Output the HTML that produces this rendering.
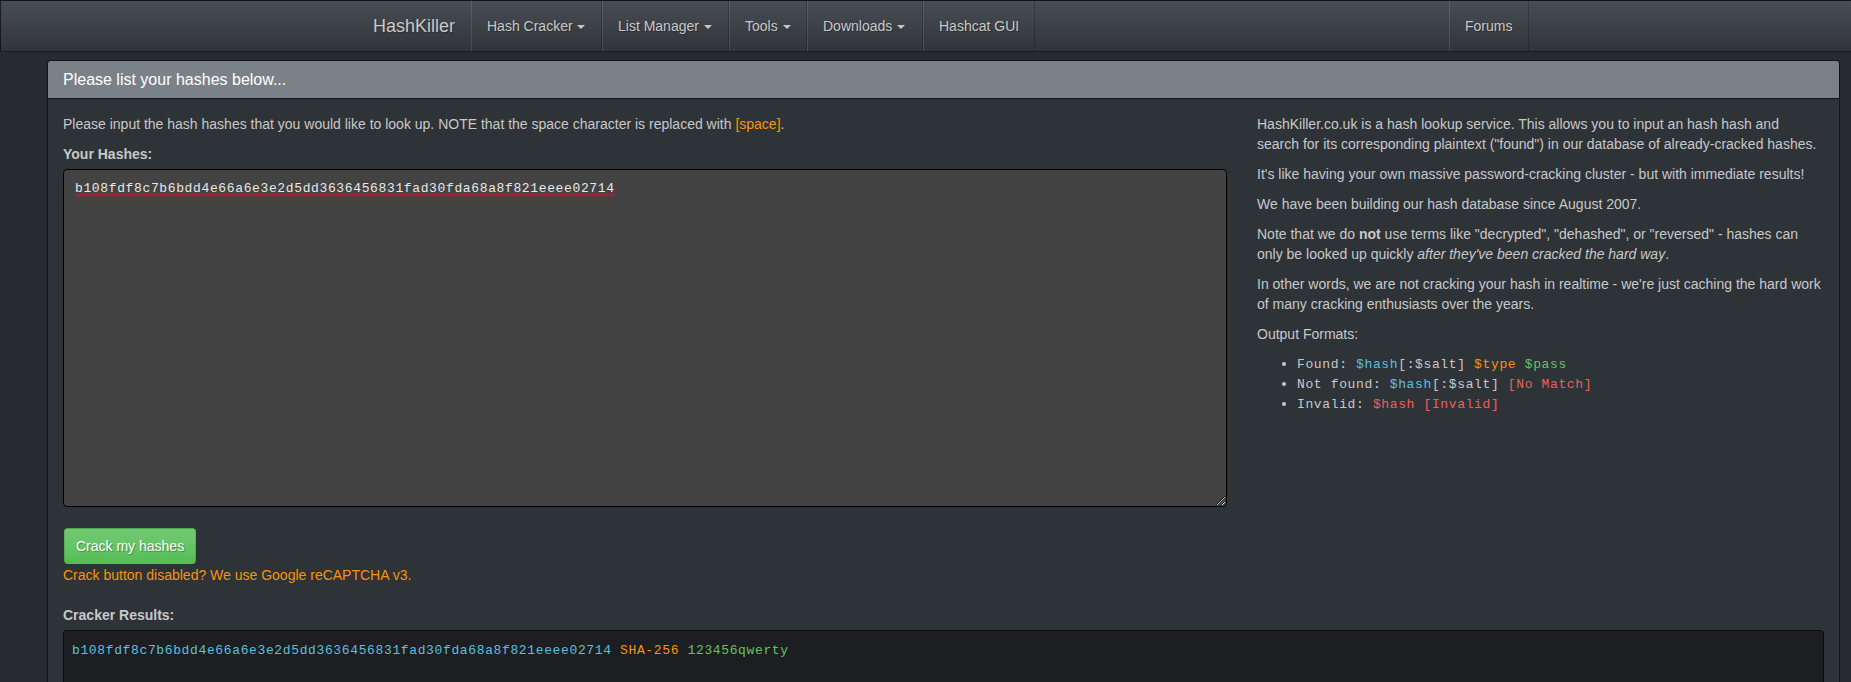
<!DOCTYPE html>
<html>
<head>
<meta charset="utf-8">
<style>
*{box-sizing:border-box;}
html,body{margin:0;padding:0;}
body{width:1851px;height:682px;overflow:hidden;background:#272b30;color:#c8c8c8;font-family:"Liberation Sans",sans-serif;font-size:14px;line-height:20px;position:relative;}
.mono{font-family:"Liberation Mono",monospace;}
.navbar{position:absolute;left:0;top:0;width:1853px;height:52px;border:1px solid rgba(0,0,0,0.6);background-image:linear-gradient(#484e55,#3a3f44 60%,#313539);text-shadow:1px 1px 1px rgba(0,0,0,0.3);}
.brand{position:absolute;left:357px;top:0;height:50px;padding:15px;font-size:18px;line-height:20px;color:#c8c8c8;}
.nav{position:absolute;top:0;height:50px;}
.nav a{position:absolute;top:0;height:50px;padding:15px;line-height:20px;color:#c8c8c8;border-left:1px solid rgba(255,255,255,0.1);border-right:1px solid rgba(0,0,0,0.2);white-space:nowrap;}
.caret{display:inline-block;width:0;height:0;margin-left:1px;vertical-align:middle;border-top:4px solid #c8c8c8;border-right:4px solid transparent;border-left:4px solid transparent;position:relative;top:0px;}
.panel{position:absolute;left:47px;top:60px;width:1793px;height:700px;background:#2e3338;border:1px solid rgba(0,0,0,0.6);border-radius:4px;}
.ph{height:38px;background:#7a8288;color:#fff;padding:10px 15px;border-bottom:1px solid #111315;border-radius:3px 3px 0 0;font-size:16px;line-height:17.6px;}
.left{position:absolute;left:15px;top:53px;width:1164px;}
.right{position:absolute;left:1209px;top:53px;width:566px;}
p{margin:0 0 10px;}
label{display:block;font-weight:bold;margin-bottom:5px;}
.orange{color:#f89406;}
.ta{position:relative;height:338px;background:#434343;border:1px solid #000;border-radius:4px;padding:6px 12px;color:#e8e8e8;font-size:14px;line-height:20px;}
.tm{font-size:13px;letter-spacing:0.63px;line-height:20px;}
.tl{position:relative;top:0px;line-height:0;}
li{height:20px;}
.squig{text-decoration:underline wavy #d21e1e;text-decoration-thickness:1px;text-underline-offset:2px;}
.btn{position:absolute;left:0;top:360px;width:132px;height:36px;border:1px solid rgba(0,0,0,0.1);border-radius:4px;background-image:linear-gradient(#72c972,#62c462 60%,#55bb55);color:#fff;padding:7px 12px 7px 11px;line-height:20px;text-shadow:1px 1px 1px rgba(0,0,0,0.3);white-space:nowrap;}
ul{margin:0 0 10px;padding-left:40px;}
.cy{color:#5bc0de;}
.gr{color:#62c462;}
.rd{color:#ee5f5b;}
.pre{position:absolute;left:15px;top:569px;width:1761px;height:200px;background:#1c1e22;border:1px solid rgba(0,0,0,0.6);border-radius:4px;padding:9px 9px;font-size:14px;line-height:20px;}
</style>
</head>
<body>
<div class="navbar">
  <div class="brand">HashKiller</div>
  <div class="nav">
    <a style="left:470px;width:131px">Hash Cracker <span class="caret"></span></a>
    <a style="left:601px;width:127px">List Manager <span class="caret"></span></a>
    <a style="left:728px;width:78px">Tools <span class="caret"></span></a>
    <a style="left:806px;width:116px">Downloads <span class="caret"></span></a>
    <a style="left:922px;width:112px">Hashcat GUI</a>
    <a style="left:1448px;width:80px">Forums</a>
  </div>
</div>
<div class="panel">
  <div class="ph">Please list your hashes below...</div>
  <div class="left">
    <p>Please input the hash hashes that you would like to look up. NOTE that the space character is replaced with <span class="orange">[space]</span>.</p>
    <label>Your Hashes:</label>
    <div class="ta"><div class="mono tm" style="position:absolute;left:11px;top:9px;">b108fdf8c7b6bdd4e66a6e3e2d5dd3636456831fad30fda68a8f821eeee02714</div><svg style="position:absolute;left:12px;top:24px" width="538" height="3"><defs><pattern id="sq" width="4" height="3" patternUnits="userSpaceOnUse"><rect x="0" y="0" width="2" height="1" fill="#e41212"/><rect x="2" y="1" width="2" height="1" fill="#e41212"/><rect x="1.5" y="0.5" width="1" height="1" fill="#e41212" opacity="0.6"/><rect x="3.5" y="0.5" width="1" height="1" fill="#e41212" opacity="0.6"/><rect x="2" y="2" width="2" height="1" fill="#e41212" opacity="0.25"/></pattern></defs><rect width="538" height="3" fill="url(#sq)"/></svg><svg style="position:absolute;left:1149px;top:322px" width="14" height="14"><line x1="3.5" y1="12.5" x2="11.5" y2="4.5" stroke="#000" stroke-width="1" opacity="0.8"/><line x1="4" y1="13" x2="12" y2="5" stroke="#e0e0e0" stroke-width="1" stroke-dasharray="1 0.5"/><line x1="8.5" y1="12.5" x2="11.5" y2="9.5" stroke="#000" stroke-width="1" opacity="0.8"/><line x1="9" y1="13" x2="12" y2="10" stroke="#e0e0e0" stroke-width="1"/></svg></div>
  </div>
  <div class="btn" style="left:16px;top:467px">Crack my hashes</div>
  <div style="position:absolute;left:15px;top:504px" class="orange">Crack button disabled? We use Google reCAPTCHA v3.</div>
  <label style="position:absolute;left:15px;top:544px">Cracker Results:</label>
  <div class="pre mono"><div class="tm" style="position:absolute;left:8px;top:10px;white-space:nowrap"><span class="cy">b108fdf8c7b6bdd4e66a6e3e2d5dd3636456831fad30fda68a8f821eeee02714</span> <span class="orange">SHA-256</span> <span class="gr">123456qwerty</span></div></div>
  <div class="right">
    <p>HashKiller.co.uk is a hash lookup service. This allows you to input an hash hash and search for its corresponding plaintext ("found") in our database of already-cracked hashes.</p>
    <p>It's like having your own massive password-cracking cluster - but with immediate results!</p>
    <p>We have been building our hash database since August 2007.</p>
    <p>Note that we do <b>not</b> use terms like "decrypted", "dehashed", or "reversed" - hashes can only be looked up quickly <i>after they've been cracked the hard way</i>.</p>
    <p>In other words, we are not cracking your hash in realtime - we're just caching the hard work of many cracking enthusiasts over the years.</p>
    <p>Output Formats:</p>
    <ul class="mono">
      <li><span class="tm tl">Found: <span class="cy">$hash</span>[:$salt] <span class="orange">$type</span> <span class="gr">$pass</span></span></li>
      <li><span class="tm tl">Not found: <span class="cy">$hash</span>[:$salt] <span class="rd">[No Match]</span></span></li>
      <li><span class="tm tl">Invalid: <span class="rd">$hash [Invalid]</span></span></li>
    </ul>
  </div>
</div>
</body>
</html>
